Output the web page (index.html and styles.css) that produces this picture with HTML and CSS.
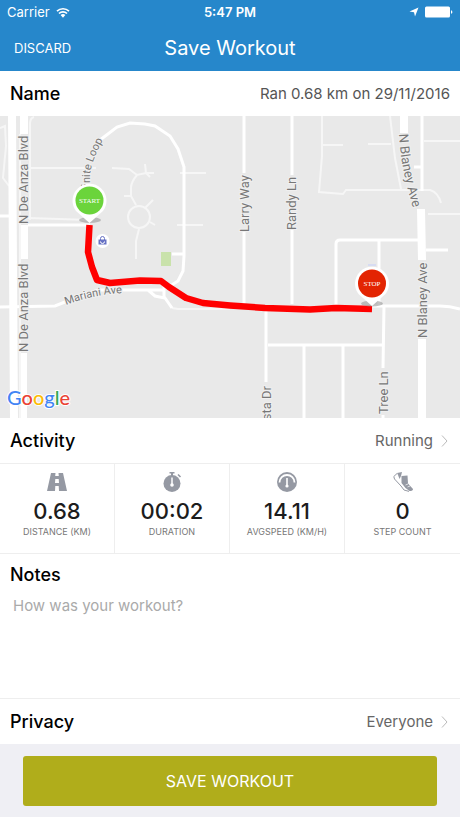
FILE: index.html
```html
<!DOCTYPE html>
<html lang="en">
  <head>
    <title>Save Workout</title>
    <meta charset="UTF-8">
    <meta name="viewport" content="width=device-width, initial-scale=1">
    <link rel="stylesheet" href="styles.css">
  </head>
  <body>
    <header class="top">
      <div class="status">
        <div class="carrier">
          <span>Carrier</span>
          <svg width="14" height="11" viewBox="0 0 14 11" aria-hidden="true">
            <path d="M1 4.2a8.6 8.6 0 0 1 12 0M3 6.5a5.7 5.7 0 0 1 8 0" fill="none" stroke="#fff" stroke-width="1.7"/>
            <path d="M4.6 8.1a3.5 3.5 0 0 1 4.8 0L7 10.8z" fill="#fff"/>
          </svg>
        </div>
        <time class="clock">5:47 PM</time>
        <div class="power">
          <svg width="10" height="10" viewBox="0 0 10 10" aria-hidden="true">
            <path d="M9.5.5L6 9.5 5 5.2.5 4.6z" fill="#fff"/>
          </svg>
          <svg width="28" height="12" viewBox="0 0 28 12" aria-hidden="true">
            <rect x="0" y="0.5" width="25" height="11" rx="1.5" fill="#fff"/>
            <path d="M26 4.2c1.8.3 1.8 3.3 0 3.6z" fill="#fff"/>
          </svg>
        </div>
      </div>
      <div class="navbar">
        <button class="discard" type="button">DISCARD</button>
        <h1>Save Workout</h1>
      </div>
    </header>

    <main>
      <form action="" method="post">
        <div class="row">
          <label for="name">Name</label>
          <input id="name" name="name" type="text" value="Ran 0.68 km on 29/11/2016">
        </div>

        <svg class="map" viewBox="0 0 460 302" role="img" aria-label="Route map">
          <defs>
            <path id="loopPath" d="M90 100V58Q92 44 103 24"/>
            <path id="marianiPath" d="M66 189Q95 178 124 177"/>
            <path id="blaneyPath" d="M399 18Q400 38 404 57Q408 76 415 98"/>
          </defs>
          <rect width="460" height="302" fill="#e9e9e9"/>
          <rect x="161" y="136" width="10" height="14" fill="#c9e2ab"/>

          <!-- minor roads -->
          <g fill="none" stroke="#f6f6f6" stroke-width="2">
            <path d="M0 12L5 10 6 30 3 62 9 70M34 1Q30 2 30 8V104M30 52H96M28 102L90 104"/>
            <path d="M112 52L129 53 137 59 146 57H154M145 48L146 57 150 61M137 59Q131 66 131 72V80L136 89M124 80H131M145 92L153 84M150 106L155 109M139 113L136 125V143"/>
            <circle cx="139" cy="101" r="11"/>
            <path d="M180 57H206M177 109H203M172 192L178 193H230"/>
            <path d="M322 0V40L319 76 343 78 346 74H430Q438 76 441 87M322 29H343M368 28H391M390 0L395 42 401 73M424 25H460M428 98H460"/>
          </g>

          <!-- streets -->
          <g fill="none" stroke="#fff" stroke-width="3">
            <path d="M0 100H10M28 109H90M0 191L55 190 70 184 98 174H164M148 174L155 180 165 182 172 192"/>
            <path d="M100 24L117 11 130 7 145 8 155 10 170 20 178 33 184 51V140L183 155 178 165 167 172M164 166V182M172 138H184"/>
            <path d="M244 0V57M244 116V188M292 0V59M292 114V188M422 0V75M414 51H422M426 134H448"/>
            <path d="M336 192V128Q336 124 340 124H418M379 124V190M372 190H440Q450 190 460 193M384 190L383 252M383 299V302"/>
            <path d="M266 192V266M268 229H383M304 229V302M343 229V302"/>
          </g>
          <g fill="none" stroke="#fff" stroke-width="8">
            <path d="M12 0L14 302M24 0V18M24 109V143M23 237V302M404 0V17M421 93L422 144M422 223V302"/>
          </g>
          <path d="M20 18V302" stroke="#f6f6f6" stroke-width="2"/>
          <path d="M368 149H376" stroke="#d7dcf2" stroke-width="2"/>

          <g class="street">
            <text transform="translate(28 108) rotate(-90)">N De Anza Blvd</text>
            <text transform="translate(28 236) rotate(-90)">N De Anza Blvd</text>
            <text transform="translate(249 116) rotate(-90)">Larry Way</text>
            <text transform="translate(296 114) rotate(-90)">Randy Ln</text>
            <text transform="translate(427 222) rotate(-90)">N Blaney Ave</text>
            <text transform="translate(388 298) rotate(-90)">Tree Ln</text>
            <text transform="translate(271 270) rotate(-90)" text-anchor="end">sta Dr</text>
            <text><textPath href="#blaneyPath">N Blaney Ave</textPath></text>
            <text class="small"><textPath href="#loopPath" startOffset="100%" text-anchor="end">Infinite Loop</textPath></text>
            <text class="small"><textPath href="#marianiPath">Mariani Ave</textPath></text>
          </g>

          <!-- shop marker -->
          <circle cx="102.5" cy="125" r="7" fill="#fff"/>
          <path d="M98.5 123.5h8v5h-8z" fill="#6772c4"/>
          <path d="M100.5 124v-1.5a2 2 0 0 1 4 0V124" fill="none" stroke="#6772c4"/>
          <path d="M100.5 125.5a2 2 0 0 0 4 0" fill="none" stroke="#fff"/>

          <!-- route -->
          <path d="M89.5 109L88 136 92 151 97 164 110 167 140 164.5 161 165 169 171 186 182 203 187 230 189.5 265 192 310 193.5 336 192 372 193" fill="none" stroke="#f00" stroke-width="6.5" stroke-linejoin="round"/>

          <g class="pin">
            <ellipse cx="90" cy="104" rx="11" ry="3" fill="#999" opacity=".6"/>
            <path d="M89.5 107L76 95A17 17 0 1 1 103 95z" fill="#fff"/>
            <circle cx="89.5" cy="84.5" r="14" fill="#6bd43b"/>
            <text x="89.5" y="87">START</text>
          </g>
          <g class="pin">
            <ellipse cx="372" cy="187.5" rx="11" ry="3" fill="#999" opacity=".6"/>
            <path d="M372 190L358.5 178A17 17 0 1 1 385.5 178z" fill="#fff"/>
            <circle cx="372" cy="167.5" r="14" fill="#e32402"/>
            <text x="372" y="170">STOP</text>
          </g>

          <text class="google" x="7" y="289"><tspan fill="#4285f4">G</tspan><tspan fill="#ea4335">o</tspan><tspan fill="#fbbc05">o</tspan><tspan fill="#4285f4">g</tspan><tspan fill="#34a853">l</tspan><tspan fill="#ea4335">e</tspan></text>
        </svg>

        <div class="row">
          <label for="activity">Activity</label>
          <button id="activity" class="pick" type="button">Running
            <svg width="7" height="14" viewBox="0 0 7 14" aria-hidden="true"><path d="M1 1.5L6 7 1 12.5"/></svg>
          </button>
        </div>

        <ul class="stats">
          <li>
            <svg width="20" height="20" viewBox="0 0 20 20" aria-hidden="true">
              <path fill-rule="evenodd" d="M4 1H8.5L8.2 4H11.8L11.5 1H16L20 19H12L11.7 14H8.3L8 19H0zM8.3 7L8 11H12L11.7 7z"/>
            </svg>
            <strong>0.68</strong>
            <span>DISTANCE (KM)</span>
          </li>
          <li>
            <svg width="20" height="20" viewBox="0 0 20 20" aria-hidden="true">
              <path d="M7.5 0h5v1.5h-1.5V4h-2V1.5H7.5z"/>
              <circle cx="10" cy="11.5" r="8.5"/>
              <path d="M16 2.5L18.5 5" stroke="#9599a3" stroke-width="1.6"/>
              <path d="M10 5.5V12" stroke="#fff" stroke-width="1.5"/>
              <circle cx="10" cy="13" r="1.8" fill="#fff"/>
            </svg>
            <strong>00:02</strong>
            <span>DURATION</span>
          </li>
          <li>
            <svg width="20" height="20" viewBox="0 0 20 20" aria-hidden="true">
              <circle cx="10" cy="10" r="10"/>
              <path d="M2.5 10.5a7.5 7.5 0 0 1 15 0" fill="none" stroke="#fff" stroke-width="1.8"/>
              <path d="M10 6V14" stroke="#fff" stroke-width="1.6"/>
              <circle cx="10" cy="14" r="1.6" fill="#fff"/>
            </svg>
            <strong>14.11</strong>
            <span>AVGSPEED (KM/H)</span>
          </li>
          <li>
            <svg width="20" height="20" viewBox="0 0 20 20" aria-hidden="true">
              <path d="M8.5 4L14.5 3.5 15 11.5 20 17Q20 19 16.5 19L12.5 16 8.5 11z"/>
              <path d="M4 1L9 0 8 4 6.5 7 5 3z"/>
              <path d="M4 1.5L.8 4.5 1.5 7 8 14 11 18 16 19.4" fill="none" stroke="#9599a3"/>
              <path d="M15 12L12.5 13M17 14L14.5 15" stroke="#fff" stroke-width=".7"/>
            </svg>
            <strong>0</strong>
            <span>STEP COUNT</span>
          </li>
        </ul>

        <div class="notes">
          <label for="notes">Notes</label>
          <textarea id="notes" name="notes" placeholder="How was your workout?"></textarea>
        </div>

        <div class="row">
          <label for="privacy">Privacy</label>
          <button id="privacy" class="pick" type="button">Everyone
            <svg width="7" height="14" viewBox="0 0 7 14" aria-hidden="true"><path d="M1 1.5L6 7 1 12.5"/></svg>
          </button>
        </div>

        <div class="actions">
          <button class="save" type="submit">SAVE WORKOUT</button>
        </div>
      </form>
    </main>
  </body>
</html>
```

FILE: styles.css
```css
/* General styles */

* {
  box-sizing: border-box;
}

body {
  margin: 0;
  background: #fff;
  color: #000;
  font-family: Inter, "Liberation Sans", sans-serif;
  font-size: 16px;
}

button,
input,
textarea {
  margin: 0;
  padding: 0;
  border: 0;
  background: none;
  font: inherit;
}

/* Header */

.top {
  background: #2687cb;
  color: #fff;
}

.status,
.navbar {
  display: grid;
  grid-template-columns: 1fr auto 1fr;
  align-items: center;
}

.status {
  height: 24px;
  padding: 0 7px;
  font-size: 13px;
}

.carrier,
.power {
  display: flex;
  align-items: center;
  gap: 6px;
}

.power {
  justify-content: flex-end;
}

.clock {
  font-weight: 600;
}

.navbar {
  height: 47px;
  padding: 0 14px;
}

.discard {
  justify-self: start;
  color: #fff;
  font-size: 13px;
}

h1 {
  margin: 0;
  font-size: 20px;
  font-weight: 400;
}

/* Form rows */

.row {
  display: flex;
  align-items: center;
  justify-content: space-between;
  height: 45px;
  padding: 0 10px;
}

label {
  font-size: 18px;
  font-weight: 500;
}

.row input {
  flex: 1;
  min-width: 0;
  color: #555;
  font-size: 15px;
  text-align: right;
}

.pick {
  display: flex;
  align-items: center;
  gap: 8px;
  padding-right: 2px;
  color: #666;
  font-size: 15px;
}

.pick path {
  fill: none;
  stroke: #bbb;
}

/* Map */

.map {
  display: block;
  width: 100%;
  height: auto;
}

.street {
  fill: #777;
  font-family: Roboto, sans-serif;
  font-size: 13px;
  stroke: #f0f0f0;
  stroke-width: 2px;
  paint-order: stroke;
}

.street .small {
  font-size: 11px;
}

.pin text {
  fill: #fff;
  font-family: "Liberation Serif", serif;
  font-size: 7px;
  text-anchor: middle;
}

.google {
  font-family: Lato, sans-serif;
  font-size: 20px;
  font-weight: 500;
  stroke: #fff;
  stroke-width: 2px;
  paint-order: stroke;
}

/* Stats */

.stats {
  display: grid;
  grid-template-columns: repeat(4, 1fr);
  margin: 0;
  padding: 0;
  border: solid #eee;
  border-width: 1px 0;
  list-style: none;
}

.stats li {
  display: flex;
  flex-direction: column;
  align-items: center;
  height: 89px;
  padding-top: 8px;
  border-right: 1px solid #eee;
}

.stats li:last-child {
  border-right: 0;
}

.stats svg {
  fill: #9599a3;
}

.stats strong {
  margin: 5px 0 1px;
  color: #1c1c1c;
  font-size: 22px;
  font-weight: 500;
  line-height: 28px;
}

.stats span {
  color: #777;
  font-size: 9px;
  line-height: 12px;
}

/* Notes */

.notes {
  height: 145px;
  padding: 10px 10px 0;
  border-bottom: 1px solid #eee;
}

.notes label {
  display: block;
  line-height: 22px;
}

.notes textarea {
  display: block;
  width: 100%;
  height: 90px;
  margin-top: 10px;
  padding: 0 3px;
  font-size: 15px;
  line-height: 20px;
  resize: none;
}

.notes textarea::placeholder {
  color: #aaa;
}

/* Save */

.actions {
  padding: 12px 23px 11px;
  background: #efeff4;
}

.save {
  display: block;
  width: 100%;
  height: 50px;
  border-radius: 3px;
  background: #b0ad1b;
  color: #fff;
  font-size: 16px;
}
```
